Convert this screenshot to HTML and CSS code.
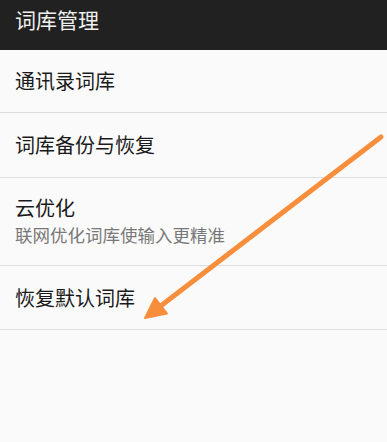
FILE: index.html
```html
<!DOCTYPE html>
<html lang="zh-CN">
<head>
<meta charset="utf-8">
<title>词库管理</title>
<link rel="stylesheet" href="styles.css">
</head>
<body>
<div class="page">
  <header class="appbar"><span class="appbar-title">词库管理</span></header>
  <ul class="list">
    <li class="item item-a"><span class="item-title">通讯录词库</span></li>
    <li class="item item-b"><span class="item-title">词库备份与恢复</span></li>
    <li class="item item-c">
      <span class="item-title">云优化</span>
      <span class="item-sub">联网优化词库使输入更精准</span>
    </li>
    <li class="item item-d"><span class="item-title">恢复默认词库</span></li>
  </ul>
  <svg class="arrow" width="387" height="442" viewBox="0 0 387 442" aria-hidden="true">
    <line x1="381" y1="137" x2="158" y2="308" stroke="#f68e3c" stroke-width="5" stroke-linecap="round"/>
    <polygon points="145,318 167,313.5 155,298" fill="#f68e3c" stroke="#f68e3c" stroke-width="2" stroke-linejoin="round"/>
  </svg>
</div>
</body>
</html>
```

FILE: styles.css
```css
html, body {
  margin: 0;
  padding: 0;
  background: #fafafa;
}
.page {
  position: relative;
  width: 387px;
  height: 442px;
  overflow: hidden;
  font-family: "Noto Sans CJK SC", "Noto Sans", sans-serif;
  background: #fafafa;
}
.appbar {
  height: 50px;
  background: #212121;
  display: flex;
  align-items: center;
  padding: 0 15px;
  box-sizing: border-box;
}
.appbar-title {
  color: #f0f0f0;
  font-size: 21px;
  line-height: 1;
  margin-top: -11px;
}
.list {
  list-style: none;
  margin: 0;
  padding: 0;
}
.item {
  display: flex;
  flex-direction: column;
  justify-content: center;
  padding: 0 15px;
  border-bottom: 1px solid #dedede;
  box-sizing: border-box;
}
.item-a { height: 63px; }
.item-b { height: 65px; }
.item-c { height: 88px; }
.item-d { height: 64px; }
.item-title {
  font-size: 20px;
  line-height: 24px;
  color: #1a1a1a;
}
.item-c .item-title {
  margin-top: -1px;
}
.item-sub {
  font-size: 17.5px;
  line-height: 24px;
  color: #787878;
  margin-top: 3px;
}
.arrow {
  position: absolute;
  left: 0;
  top: 0;
  pointer-events: none;
}
```
